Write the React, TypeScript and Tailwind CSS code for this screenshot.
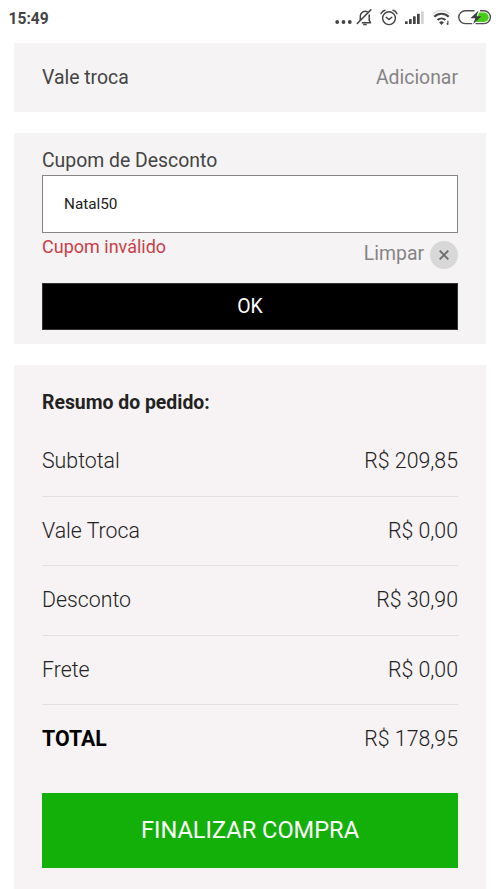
const items = [
  { label: "Subtotal", value: "R$ 209,85" },
  { label: "Vale Troca", value: "R$ 0,00" },
  { label: "Desconto", value: "R$ 30,90" },
  { label: "Frete", value: "R$ 0,00" },
];

function StatusIcons() {
  return (
    <div className="flex items-center text-[#444]">
      <svg width="18" height="20" viewBox="0 0 18 20" fill="currentColor">
        <circle cx="2.2" cy="13" r="1.9" />
        <circle cx="8.5" cy="13" r="1.9" />
        <circle cx="14.8" cy="13" r="1.9" />
      </svg>
      {/* Muted bell */}
      <svg className="ml-[3px]" width="18" height="20" viewBox="0 0 18 20" fill="none" stroke="currentColor" strokeWidth="1.5" strokeLinejoin="round">
        <path d="M4.3 11.5V6.9a4.8 4.8 0 0 1 7.3-4M13.2 5.6v5.8l1.3 2.3H5.8" />
        <path d="M14.8.9 1.3 14.5" strokeLinecap="round" />
        <path d="M7.2 15.5h3.5" />
      </svg>
      {/* Alarm */}
      <svg className="ml-1.5" width="18" height="20" viewBox="0 0 18 20" fill="none" stroke="currentColor" strokeWidth="1.4" strokeLinecap="round">
        <circle cx="9" cy="9.2" r="6.4" />
        <path d="M1 4.7Q2.3 1.9 5 1.2M13 1.2q2.7.7 4 3.5" />
        <path d="m6.2 8.3 2.8 2.2 2.8-2.2" />
      </svg>
      {/* Signal */}
      <svg className="ml-[7px]" width="19" height="20" viewBox="0 0 19 20" fill="currentColor">
        <rect x="0" y="12.2" width="2.7" height="2.8" rx=".6" />
        <rect x="4" y="10" width="2.7" height="5" rx=".6" />
        <rect x="8" y="7.3" width="2.7" height="7.7" rx=".6" />
        <rect x="12" y="4.7" width="2.7" height="10.3" rx=".6" />
        <rect x="16" y="2.2" width="2.7" height="12.8" rx=".6" fill="#d2d2d2" />
      </svg>
      {/* Wi-Fi */}
      <svg className="ml-2" width="20" height="20" viewBox="0 0 20 20" fill="none" stroke="currentColor" strokeWidth="2">
        <path d="M1.2 4.6a12.5 12.5 0 0 1 16.6 0" stroke="#dedede" strokeWidth="1.5" />
        <path d="M2.3 7.7a10.5 10.5 0 0 1 14.4 0" />
        <path d="M5.5 11.1a5.9 5.9 0 0 1 8 0" />
        <path d="m9.5 16-2.4-2.5a3.3 3.3 0 0 1 4.8 0z" fill="currentColor" stroke="none" />
        <path d="M15.9 11.7v4m-1.2-1.2 1.2 1.2" strokeWidth="1.1" />
      </svg>
      {/* Charging battery */}
      <svg className="ml-1.5" width="34" height="20" viewBox="0 0 34 20">
        <path d="M16.5 1.8H7.2a6.4 6.4 0 0 0 0 12.8h7M22 1.8h4a6.4 6.4 0 0 1 0 12.8h-8.5" fill="none" stroke="#505050" strokeWidth="1.4" />
        <path d="M21 3.5h5a4.7 4.7 0 0 1 0 9.4h-8z" fill="#46ce16" />
        <path d="m20.6 1.4-8.2 7.9h4.9l-2.2 6 8.2-8h-4.8z" fill="#3c3c3c" />
      </svg>
    </div>
  );
}

export default function App() {
  return (
    <div className="flex h-[889px] w-full flex-col overflow-hidden bg-white font-[Roboto,sans-serif] text-[#444]">
      <header className="flex h-[43px] shrink-0 items-start justify-between pl-[8.5px] pr-[8px] pt-[9px]">
        <span className="text-[15.6px] leading-5 font-bold">15:49</span>
        <StatusIcons />
      </header>

      <main className="flex flex-1 flex-col gap-[21px] px-3.5">
        <section className="flex h-[69px] shrink-0 items-center justify-between bg-[#f5f3f4] px-7 text-[19.4px]">
          <span>Vale troca</span>
          <button className="text-[#858384]">Adicionar</button>
        </section>

        <section className="h-[211px] shrink-0 bg-[#f5f3f4] px-7 pt-[15px]">
          <label htmlFor="cupom" className="block text-[19.4px] leading-[25px]">
            Cupom de Desconto
          </label>
          <input
            id="cupom"
            defaultValue="Natal50"
            className="mt-0.5 block h-[58px] w-full border-[1.5px] border-[#858384] bg-white px-[21px] text-[15.3px] text-[#222] outline-none"
          />
          <div className="flex h-[50px] justify-between">
            <span className="pt-0.5 text-[18px] leading-[23px] text-[#c83f49]">Cupom inválido</span>
            <button className="mt-2 flex h-7 items-center gap-1.5 text-[19.4px] text-[#858384]">
              <span className="-mt-0.5">Limpar</span>
              <span className="flex size-7 items-center justify-center rounded-full bg-[#d9d8d8]">
                <svg width="10" height="10" viewBox="0 0 10 10" stroke="#6b6b6b" strokeWidth="1.8">
                  <path d="m.7.7 8.6 8.6M9.3.7.7 9.3" />
                </svg>
              </span>
            </button>
          </div>
          <button className="block h-[47px] w-full border border-[#333] bg-black text-[19.4px] text-white">OK</button>
        </section>

        <section className="flex-1 bg-[#f7f3f4] px-7 pt-[26px]">
          <h2 className="text-[19.4px] leading-6 font-bold text-[#222]">Resumo do pedido:</h2>
          <dl className="mt-3 text-[21.3px] text-[#222]">
            {items.map((item) => (
              <div key={item.label} className="flex h-[69.5px] items-center justify-between border-b border-[#e4e0e1] font-light">
                <dt>{item.label}</dt>
                <dd>{item.value}</dd>
              </div>
            ))}
            <div className="flex h-[68px] items-center justify-between font-light">
              <dt className="font-bold text-black">TOTAL</dt>
              <dd>R$ 178,95</dd>
            </div>
          </dl>
          <button className="mt-5 block h-[75px] w-full bg-[#14b00a] text-[23.6px] text-white">FINALIZAR COMPRA</button>
        </section>
      </main>
    </div>
  );
}
